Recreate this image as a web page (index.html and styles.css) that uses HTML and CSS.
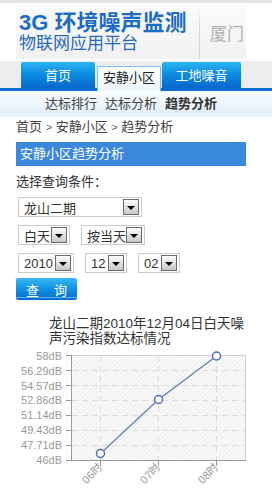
FILE: index.html
```html
<!DOCTYPE html>
<html lang="zh-CN">
<head>
    <meta charset="UTF-8">
    <meta name="viewport" content="width=device-width, initial-scale=1.0">
    <title>3G 环境噪声监测 - 趋势分析</title>
    <link rel="stylesheet" href="styles.css">
</head>
<body>

    <div class="topbar"></div>

    <!-- 头部 -->
    <div class="header">
        <div class="logo">
            <div class="logo-main">3G 环境噪声监测</div>
            <div class="logo-sub">物联网应用平台</div>
        </div>
        <div class="divider"></div>
        <div class="city">厦门</div>
    </div>

    <!-- 主导航 -->
    <div class="nav">
        <a class="tab tab-home">首页</a>
        <a class="tab tab-active">安静小区</a>
        <a class="tab tab-site">工地噪音</a>
    </div>

    <div class="subnav">
        <a>达标排行</a>
        <a>达标分析</a>
        <a class="current">趋势分析</a>
    </div>

    <div class="crumbs">首页 <span class="sep">&gt;</span> 安静小区 <span class="sep">&gt;</span> 趋势分析</div>

    <div class="panel-title">安静小区趋势分析</div>

    <!-- 查询条件 -->
    <div class="query">
        <div class="query-label">选择查询条件：</div>

        <div class="row row-first">
            <div class="select w-area"><span>龙山二期</span><i class="arrow"></i></div>
        </div>
        <div class="row">
            <div class="select w-day"><span>白天</span><i class="arrow"></i></div>
            <div class="select w-mode"><span>按当天</span><i class="arrow"></i></div>
        </div>
        <div class="row">
            <div class="select w-year"><span>2010</span><i class="arrow"></i></div>
            <div class="select w-small"><span>12</span><i class="arrow"></i></div>
            <div class="select w-small"><span>02</span><i class="arrow"></i></div>
        </div>
        <button class="btn-query">查 询</button>
    </div>

    <!-- 图表 -->
    <div class="chart">
        <div class="chart-title">龙山二期2010年12月04日白天噪<br>声污染指数达标情况</div>
        <svg class="chart-svg" width="272" height="145" viewBox="0 0 272 145">
            <defs>
                <pattern id="hatch" patternUnits="userSpaceOnUse" width="5" height="5">
                    <rect width="5" height="5" fill="#f8f8f8"/>
                    <path d="M-1 1 L1 -1 M0 5 L5 0 M4 6 L6 4" stroke="#ececec" stroke-width="1"/>
                </pattern>
            </defs>
            <g transform="translate(0,-346)">
                <rect x="71.5" y="355.5" width="174" height="105" fill="url(#hatch)" stroke="#d0d0d0"/>

                <!-- 网格 -->
                <g stroke="#dcdcdc" stroke-dasharray="6 4">
                    <line x1="72" y1="370.5" x2="246" y2="370.5"/>
                    <line x1="72" y1="385.5" x2="246" y2="385.5"/>
                    <line x1="72" y1="400.5" x2="246" y2="400.5"/>
                    <line x1="72" y1="415.5" x2="246" y2="415.5"/>
                    <line x1="72" y1="430.5" x2="246" y2="430.5"/>
                    <line x1="72" y1="445.5" x2="246" y2="445.5"/>
                    <line x1="100.5" y1="356" x2="100.5" y2="460"/>
                    <line x1="158.5" y1="356" x2="158.5" y2="460"/>
                    <line x1="216.5" y1="356" x2="216.5" y2="460"/>
                </g>

                <!-- 坐标轴 -->
                <g stroke="#999">
                    <line x1="71.5" y1="355" x2="71.5" y2="461"/>
                    <line x1="71" y1="460.5" x2="246" y2="460.5"/>
                    <line x1="66" y1="355.5" x2="71" y2="355.5"/>
                    <line x1="66" y1="370.5" x2="71" y2="370.5"/>
                    <line x1="66" y1="385.5" x2="71" y2="385.5"/>
                    <line x1="66" y1="400.5" x2="71" y2="400.5"/>
                    <line x1="66" y1="415.5" x2="71" y2="415.5"/>
                    <line x1="66" y1="430.5" x2="71" y2="430.5"/>
                    <line x1="66" y1="445.5" x2="71" y2="445.5"/>
                    <line x1="66" y1="460.5" x2="71" y2="460.5"/>
                    <line x1="100.5" y1="461" x2="100.5" y2="466"/>
                    <line x1="158.5" y1="461" x2="158.5" y2="466"/>
                    <line x1="216.5" y1="461" x2="216.5" y2="466"/>
                </g>

                <g class="axis-label" text-anchor="end">
                    <text x="62" y="359.5">58dB</text>
                    <text x="62" y="374.5">56.29dB</text>
                    <text x="62" y="389.5">54.57dB</text>
                    <text x="62" y="404">52.86dB</text>
                    <text x="62" y="419">51.14dB</text>
                    <text x="62" y="434">49.43dB</text>
                    <text x="62" y="449">47.71dB</text>
                    <text x="62" y="464">46dB</text>
                    <text transform="translate(103,468) rotate(-45)">06时</text>
                    <text transform="translate(161,468) rotate(-45)">07时</text>
                    <text transform="translate(219,468) rotate(-45)">08时</text>
                </g>

                <!-- 数据 -->
                <polyline points="100.5,453.5 158.5,399.5 216.5,356" fill="none" stroke="#5a80b8" stroke-width="1.2"/>
                <g fill="#fff" stroke="#4a72b0" stroke-width="1.5">
                    <circle cx="100.5" cy="453.5" r="4"/>
                    <circle cx="158.5" cy="399.5" r="4"/>
                    <circle cx="216.5" cy="356" r="4"/>
                </g>
            </g>
        </svg>
    </div>

</body>
</html>
```

FILE: styles.css
```css
body {
    margin: 0;
    padding: 0;
    background-color: #fff;
    font-family: "Liberation Sans", "Noto Sans CJK SC", sans-serif;
    font-size: 13px;
    color: #333;
    width: 272px;
    overflow: hidden;
}

a {
    text-decoration: none;
    cursor: pointer;
}

.topbar {
    height: 3px;
    background-color: #e6e6e6;
}

/* 头部 */
.header {
    display: flex;
    width: 230px;
    height: 55px;
    margin: 1px 0 0 16px;
    background: linear-gradient(#fbfbfb, #f1f1f1);
}

.logo {
    width: 180px;
    padding: 7px 0 0 3px;
    color: #1a6cc6;
}

.logo-main {
    font-size: 22px;
    font-weight: bold;
    line-height: 24px;
    white-space: nowrap;
}

.logo-sub {
    font-size: 17px;
    line-height: 18px;
    color: #2468c0;
}

.divider {
    width: 1px;
    margin-top: 6px;
    background: linear-gradient(rgba(210, 210, 210, 0), #d6d6d6 30%, #d6d6d6);
}

.city {
    padding: 22px 0 0 10px;
    font-size: 17px;
    line-height: 18px;
    color: #b0b0b0;
}

/* 主导航 */
.nav {
    display: flex;
    align-items: flex-end;
    height: 27px;
    margin-top: 2px;
    padding-left: 21px;
    background-color: #ededed;
    border-bottom: 3px solid #0a6ccd;
}

.tab {
    height: 26px;
    line-height: 28px;
    text-align: center;
    color: #fff;
    font-size: 13px;
    background: linear-gradient(#2cb4f4, #0c8ee2 45%, #0768cc);
    border-radius: 2px 2px 0 0;
}

.tab-home {
    width: 74px;
}

.tab-site {
    width: 79px;
    margin-left: 1px;
}

.tab-active {
    width: 62px;
    height: 24px;
    margin: 0 0 -3px 2px;
    line-height: 22px;
    color: #222;
    background: linear-gradient(#ffffff, #eaf6fd);
    border: 1px solid #7cc4f0;
    border-bottom: none;
    border-radius: 0;
}

.subnav {
    display: flex;
    gap: 8px;
    height: 26px;
    line-height: 26px;
    padding-left: 45px;
    background: linear-gradient(#f6fbfe, #e2f0fa);
}

.subnav a {
    color: #444;
    font-size: 13px;
}

.subnav a.current {
    color: #333;
    font-weight: bold;
}

.crumbs {
    height: 25px;
    line-height: 20px;
    margin-left: 16px;
    color: #444;
}

.crumbs .sep {
    color: #666;
    font-size: 11px;
}

.panel-title {
    width: 226px;
    height: 24px;
    line-height: 24px;
    margin-left: 16px;
    padding-left: 4px;
    background-color: #3988de;
    color: #fff;
}

/* 查询条件 */
.query {
    padding-left: 16px;
}

.query-label {
    line-height: 20px;
    margin-top: 6px;
}

.row {
    display: flex;
    gap: 11px;
    margin-top: 8px;
    padding-left: 2px;
}

.row-first {
    margin-top: 5px;
}

.select {
    display: flex;
    align-items: center;
    justify-content: space-between;
    height: 18px;
    padding: 0 2px 0 5px;
    border: 1px solid #cccccc;
    background-color: #fff;
    color: #333;
}

.w-area { width: 115px; }
.w-day { width: 43px; }
.w-mode { width: 55px; }
.w-year { width: 47px; }
.w-small { width: 33px; }

.arrow {
    position: relative;
    width: 14px;
    height: 14px;
    border: 1px solid #6a6a6a;
    background: linear-gradient(#fdfdfd, #c8c8c8);
}

/* 下拉三角 */
.arrow::after {
    content: "";
    position: absolute;
    left: 3px;
    top: 6px;
    border-left: 4px solid transparent;
    border-right: 4px solid transparent;
    border-top: 4px solid #000;
}

.btn-query {
    display: block;
    width: 61px;
    height: 22px;
    margin-top: 5px;
    padding: 0;
    border: none;
    border-radius: 2px;
    font-family: "Noto Sans CJK SC", sans-serif;
    font-size: 13px;
    color: #fff;
    letter-spacing: 6px;
    text-indent: 6px;
    background: linear-gradient(#3ab8f4, #1294e6 45%, #0674d4 85%, #6fc0f0 88%, #0870d0 92%);
    cursor: pointer;
}

/* 图表 */
.chart {
    margin-top: 16px;
}

.chart-title {
    margin-left: 49px;
    font-size: 13.5px;
    line-height: 15px;
    white-space: nowrap;
    color: #333;
}

.chart-svg {
    display: block;
}

.axis-label {
    font-family: "Liberation Sans", "Noto Sans CJK SC", sans-serif;
    font-size: 11px;
    fill: #999;
}
```
